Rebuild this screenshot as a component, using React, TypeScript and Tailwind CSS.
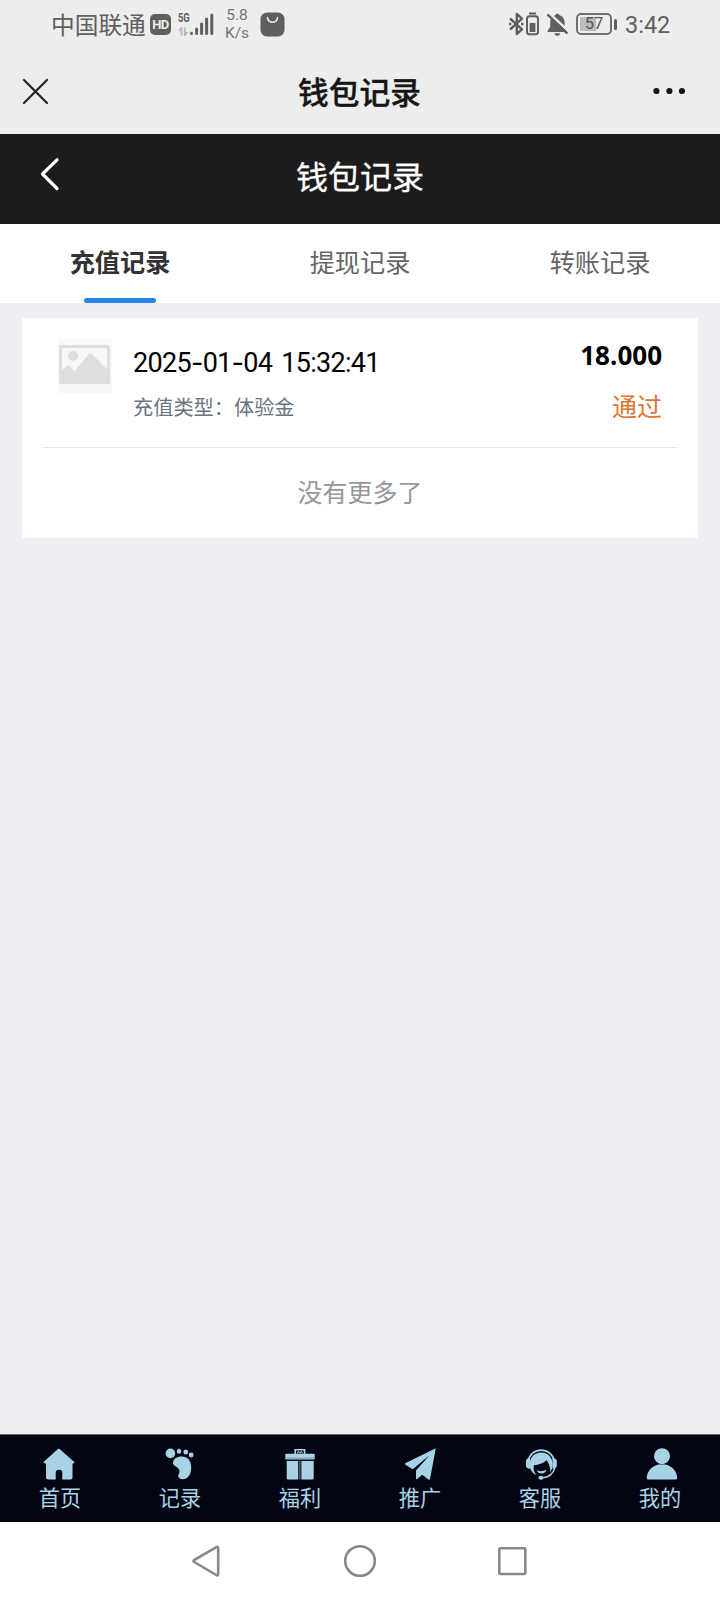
import type { ReactNode } from "react";

const CJK = "font-['Noto_Sans_CJK_SC',sans-serif]";

function StatusBar() {
  return (
    <div className="flex h-12 items-center text-[#5f5f5f]">
      <span className="ml-[51px] w-24 whitespace-nowrap text-[23.7px] leading-[46px]">中国联通</span>
      <span className="ml-[3px] flex h-[21px] w-[21px] items-center justify-center rounded-[5px] bg-[#5f5f5f] font-['Roboto',sans-serif] text-[13px] leading-none font-bold tracking-tighter text-[#ededed]">
        HD
      </span>
      <div className="ml-[7px] flex h-6 w-[11px] flex-col justify-between">
        <span className="origin-left scale-x-[0.72] font-['Roboto',sans-serif] text-[13px] leading-[12px] font-bold">5G</span>
        <svg className="h-[9px] w-[11px]" viewBox="0 0 11 9" fill="none" stroke="#b5b5b5" strokeWidth="1.8">
          <path d="M3.5 8.5V1L0.8 4M6.8 0.5V8L9.6 5" />
        </svg>
      </div>
      <svg className="ml-[1px] h-6 w-6" viewBox="0 0 24 24" stroke="#5f5f5f" strokeWidth="3" strokeLinecap="round">
        <path d="M1.5 21.3V21.5M6.6 17V21.5M11.6 12V21.5M16.6 7V21.5M21.8 3V21.5" />
      </svg>
      <div className="ml-[9px] flex w-7 flex-col items-center font-['Roboto',sans-serif] text-[15.5px] leading-[18px] text-[#777]">
        <span>5.8</span>
        <span>K/s</span>
      </div>
      <svg className="ml-[8.5px] h-[25px] w-[25px]" viewBox="0 0 25 25">
        <rect x="0.5" y="0.5" width="24" height="24" rx="6.5" fill="#5f5f5f" />
        <path d="M7.5 5.5a5 4.8 0 0 0 10 0" fill="none" stroke="#ededed" strokeWidth="1.5" strokeLinecap="round" />
      </svg>
      <svg className="ml-auto h-6 w-[15px]" viewBox="0 0 15 24" fill="none" stroke="#5f5f5f" strokeWidth="2.4" strokeLinejoin="round">
        <path d="M1 6.5L13 17.3L7.8 22V2L13 6.7L1 17.5" />
        <path d="M0 12h2.4M12 12h2.4" />
      </svg>
      <svg className="ml-[2px] h-6 w-[13px]" viewBox="0 0 13 24">
        <path d="M3 1.5h7" stroke="#5f5f5f" strokeWidth="2" />
        <rect x="1" y="4.2" width="11" height="18" rx="2.5" fill="none" stroke="#5f5f5f" strokeWidth="2" />
        <rect x="3.6" y="11" width="5.8" height="9" fill="#5f5f5f" />
      </svg>
      <svg className="ml-[7px] h-6 w-[23px]" viewBox="0 0 23 24">
        <path d="M9.2 3.2a2.4 2.4 0 0 1 4.4 0c3.4 1 5 3.7 5 7v5l2.4 3.5v1.3H1.6v-1.3L4.2 15v-5c0-3.4 1.8-5.8 5-6.8Z" fill="#5f5f5f" />
        <path d="M8.5 21.3h5.6a2.8 2.4 0 0 1-5.6 0Z" fill="#5f5f5f" />
        <path d="M2.8 1L23 19.5" stroke="#ededed" strokeWidth="2.4" />
        <path d="M1.4 2.4L21.4 21.6" stroke="#5f5f5f" strokeWidth="2.2" />
      </svg>
      <div className="ml-[7px] flex h-[22px] w-[36px] items-center justify-center rounded-[5px] border-2 border-[#707070] bg-[linear-gradient(90deg,#bcbcbc_57%,transparent_57%)] bg-clip-content p-[2px] font-['Roboto',sans-serif] text-[16.5px] leading-none text-[#555]">
        57
      </div>
      <span className="ml-[2px] h-[11px] w-[3px] rounded-sm bg-[#5f5f5f]" />
      <span className="mr-[49px] ml-[8px] w-[46px] whitespace-nowrap pt-[1px] font-['Roboto',sans-serif] text-[23.5px] leading-[46px]">3:42</span>
    </div>
  );
}

function AppHeader() {
  return (
    <header className="flex h-[86px] items-center justify-between pr-[35px] pl-[22px]">
      <svg className="h-[27px] w-[27px]" viewBox="0 0 27 27" stroke="#222" strokeWidth="2.2" strokeLinecap="round">
        <path d="M2 2L25 25M25 2L2 25" />
      </svg>
      <h1 className="ml-[17px] pt-[1px] text-[30.7px] leading-none font-medium text-[#161616] [-webkit-text-stroke:0.4px_#161616]">钱包记录</h1>
      <svg className="h-2 w-8" viewBox="0 0 32 8" fill="#161616">
        <circle cx="3.4" cy="4" r="3.1" />
        <circle cx="16.4" cy="4" r="3.1" />
        <circle cx="29" cy="4" r="3.1" />
      </svg>
    </header>
  );
}

function PageHeader() {
  return (
    <div className="flex h-[90px] items-start justify-between bg-[#1c1c1c] px-[38px] text-white">
      <svg className="mt-[23px] h-[34px] w-6" viewBox="0 0 24 34" fill="none" stroke="currentColor" strokeWidth="3.2" strokeLinecap="round" strokeLinejoin="round">
        <path d="M19 2.8L4.5 17L19 31.5" />
      </svg>
      <h2 className="mt-[25px] text-[32px] leading-[32px] [-webkit-text-stroke:0.3px_white]">钱包记录</h2>
      <span className="w-6" />
    </div>
  );
}

function Tabs() {
  return (
    <div className="grid h-[79px] grid-cols-3 bg-white text-[25.2px] leading-[74px] text-[#646566]">
      <div className="flex flex-col items-center">
        <span className="h-[74px] font-bold text-[#323233]">充值记录</span>
        <span className="h-[5px] w-[72px] rounded-full bg-[#2585e8]" />
      </div>
      <div className="text-center">提现记录</div>
      <div className="text-center">转账记录</div>
    </div>
  );
}

function Placeholder() {
  return (
    <div className="h-[54px] w-[54px] bg-[#f7f8fa]">
      <svg className="h-full w-full" viewBox="0 0 54 54" fill="#dcdee0">
        <path fillRule="evenodd" d="M3 6H50Q52 6 52 8V43Q52 45 50 45H3Q1 45 1 43V8Q1 6 3 6ZM4 9V31L8.5 27.2Q10.3 25.8 12 27.2L16.5 32L30.5 15.5Q32.5 13.5 34.5 15.5L49 30V9Z" />
        <circle cx="15" cy="17" r="5" />
      </svg>
    </div>
  );
}

function RecordCard() {
  return (
    <section className="mx-[22px] mt-[15px] h-[220px] rounded-[2px] bg-white px-[21px]">
      <div className="flex h-[130px] items-start border-b border-[#e4e5e8] pt-[21px] pr-[15px] pl-[15px]">
        <Placeholder />
        <div className="ml-[21px] flex flex-col">
          <span className="mt-[9px] whitespace-nowrap font-['Roboto',sans-serif] text-[27px] leading-[30px] tracking-[-0.7px] text-black [word-spacing:3px]">
            2025<span className="font-['Inter',sans-serif]">-</span>01<span className="font-['Inter',sans-serif]">-</span>04 15:32:41
          </span>
          <span className="mt-[14px] text-[20.2px] leading-[30px] text-[#6b7280]">充值类型：体验金</span>
        </div>
        <div className="ml-auto flex flex-col items-end">
          <span className="mt-[1px] font-['Open_Sans',sans-serif] text-[26px] leading-[30px] font-bold text-black">18.000</span>
          <span className="mt-[19px] text-[25px] leading-[32px] text-[#dc7631]">通过</span>
        </div>
      </div>
      <p className="text-center text-[25px] leading-[86px] text-[#969799]">没有更多了</p>
    </section>
  );
}

function NavItem({ label, children }: { label: string; children: ReactNode }) {
  return (
    <div className="flex flex-col items-center pt-[13px]">
      <svg className="h-8 w-8 overflow-visible" viewBox="0 0 32 32" fill="#a8d2e5">
        {children}
      </svg>
      <span className="mt-[1px] text-[21.2px] leading-[32px] text-[#a8d2e5]">{label}</span>
    </div>
  );
}

function BottomNav() {
  return (
    <nav className="mt-auto grid h-[88px] grid-cols-6 border-t border-[#66666e] bg-[#040513]">
      <NavItem label="首页">
        <path d="M15 0.5L30.3 14Q31 15.6 28.5 15.4V29.5Q28.5 31.6 26.5 31.6H18.3V24.5Q18.3 21.8 15 21.8T11.7 24.5V31.6H4Q2 31.6 2 29.5V15.4Q-1 15.6 -0.5 14L14 1Q15 0.1 16 1Z" />
      </NavItem>
      <NavItem label="记录">
        <circle cx="6.4" cy="5.4" r="4.8" />
        <ellipse cx="15" cy="3.2" rx="2.2" ry="2.5" />
        <ellipse cx="21.8" cy="4" rx="2.4" ry="2.5" />
        <circle cx="27.2" cy="7" r="2.4" />
        <path d="M9 14.5C9.2 10.8 13 8.4 17.5 8.4C24 8.4 27.2 13 27.2 19.5C27.2 27 23.5 31.2 18.8 31.2C14.8 31.2 13.4 28.6 14.8 26C16.2 23.2 15.4 20.8 12.6 19C10.2 17.6 8.9 16.6 9 14.5Z" />
      </NavItem>
      <NavItem label="福利">
        <path d="M11.2 6V1.8H20.6V6" fill="none" stroke="#a8d2e5" strokeWidth="1.6" />
        <path d="M13.3 5.5L14.3 3.6L15.9 5L17.5 3.6L18.5 5.5" fill="none" stroke="#8fb4c7" strokeWidth="1.1" />
        <rect x="1.3" y="5.8" width="29.4" height="5.8" rx="1" />
        <path d="M1.3 10.2H30.7" stroke="#7b9aac" strokeWidth="1" />
        <path d="M2.7 13H14.2V31.5H4.2Q2.7 31.5 2.7 30ZM17.4 13H29.7V30Q29.7 31.5 28.2 31.5H17.4Z" />
        <path d="M15.8 13V31.5" stroke="#526777" strokeWidth="1.4" />
      </NavItem>
      <NavItem label="推广">
        <path d="M31.8 0.3L1.2 15.2Q0.5 16 1.5 16.7L8.7 21.2L25.5 7.3L12 22.5V30.8Q12.3 31.8 13.2 31L18.2 26.8L24.7 31.7Q25.6 32 26 31Z" />
      </NavItem>
      <NavItem label="客服">
        <path d="M4.2 13A13.2 13.2 0 0 1 30.2 13" fill="none" stroke="#a8d2e5" strokeWidth="1.8" />
        <path d="M6 10.5Q3 9.8 1.9 12.5V18.2Q3 21.3 6 20.5ZM28.5 10.5Q31.3 9.8 32.8 12.5V18.2Q31.3 21.3 28.5 20.5Z" />
        <path d="M6.2 20.5C3.9 11 9.5 4.4 17.2 4.4C25 4.4 30.2 11 28.2 20.5L26.2 24C26.6 19.5 25.2 16 22.5 12C19.5 15.6 14.5 16.8 9.9 17.2C9 21 10 24.5 12.5 27.3C9.4 25.7 7.3 23.5 6.2 20.5Z" />
        <path d="M12.7 22.2Q17.3 24.3 22.4 21.7Q21.4 25.5 17.6 25.5Q14 25.5 12.7 22.2Z" />
        <path d="M30.8 20C29 26 24.5 29.3 18.5 29.8" fill="none" stroke="#a8d2e5" strokeWidth="1.5" />
        <ellipse cx="17" cy="29.7" rx="2.6" ry="2" />
      </NavItem>
      <NavItem label="我的">
        <circle cx="18" cy="8.2" r="8" />
        <path d="M14.5 16.5H21.5C28.5 18 33.1 24 33.1 30Q33.1 31.5 31.5 31.5H4.3Q2.7 31.5 2.7 30C2.7 24 7.5 18 14.5 16.5Z" />
      </NavItem>
    </nav>
  );
}

function SystemNav() {
  return (
    <div className="flex h-[78px] items-start justify-center bg-white pt-[22px]">
      <svg className="h-[34px] w-[340px]" viewBox="0 0 340 34" fill="none" stroke="#898989" strokeWidth="2.6" strokeLinejoin="round">
        <path d="M26.4 3.2L4.2 16Q2.6 17 4.2 18L26.2 31Q28.2 32 28.2 30V4Q28.2 2.3 26.4 3.2Z" />
        <circle cx="170" cy="17" r="14.8" />
        <rect x="309.3" y="4.2" width="26" height="25.8" rx="1.2" />
      </svg>
    </div>
  );
}

export default function App() {
  return (
    <main className={`flex h-[1600px] w-[720px] flex-col overflow-hidden bg-[#eeeef3] ${CJK}`}>
      <div className="bg-[#ededed]">
        <StatusBar />
        <AppHeader />
      </div>
      <PageHeader />
      <Tabs />
      <RecordCard />
      <BottomNav />
      <SystemNav />
    </main>
  );
}
